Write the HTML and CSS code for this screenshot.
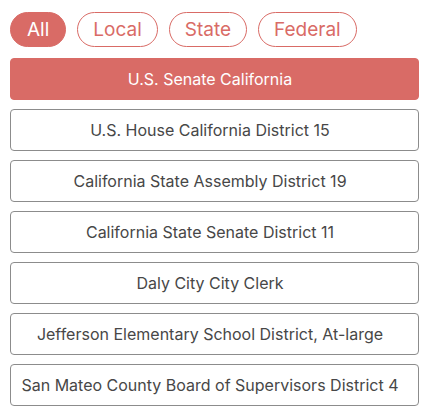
FILE: index.html
```html
<!DOCTYPE html>
<html>
<head>
<meta charset="utf-8">
<link rel="stylesheet" href="styles.css">
</head>
<body>
<div class="page">
  <div class="filters">
    <div class="pill active">All</div>
    <div class="pill">Local</div>
    <div class="pill">State</div>
    <div class="pill">Federal</div>
  </div>
  <div class="list">
    <div class="row selected">U.S. Senate California</div>
    <div class="row">U.S. House California District 15</div>
    <div class="row">California State Assembly District 19</div>
    <div class="row">California State Senate District 11</div>
    <div class="row">Daly City City Clerk</div>
    <div class="row">Jefferson Elementary School District, At-large</div>
    <div class="row">San Mateo County Board of Supervisors District 4</div>
  </div>
</div>
</body>
</html>
```
FILE: styles.css
```css
html, body {
  margin: 0;
  padding: 0;
  background: #ffffff;
}
.page {
  padding: 12px 13px 0 10px;
  font-family: Inter, "Liberation Sans", Arial, sans-serif;
}
.filters {
  display: flex;
  gap: 11px;
}
.pill {
  height: 35px;
  box-sizing: border-box;
  border: 1px solid #d96b66;
  border-radius: 18px;
  color: #d96b66;
  font-size: 19px;
  display: flex;
  align-items: center;
  justify-content: center;
  padding: 0 15px;
}
.pill.active {
  background: #d96b66;
  color: #ffffff;
  padding: 0 16px;
}
.list {
  margin-top: 11px;
  display: flex;
  flex-direction: column;
  gap: 9px;
}
.row {
  height: 42px;
  box-sizing: border-box;
  border: 1px solid #8c8c8c;
  border-radius: 4px;
  display: flex;
  align-items: center;
  justify-content: center;
  padding-right: 9px;
  font-size: 16px;
  color: #474747;
}
.row.selected {
  background: #d96b66;
  border-color: #d96b66;
  color: #ffffff;
}
```
